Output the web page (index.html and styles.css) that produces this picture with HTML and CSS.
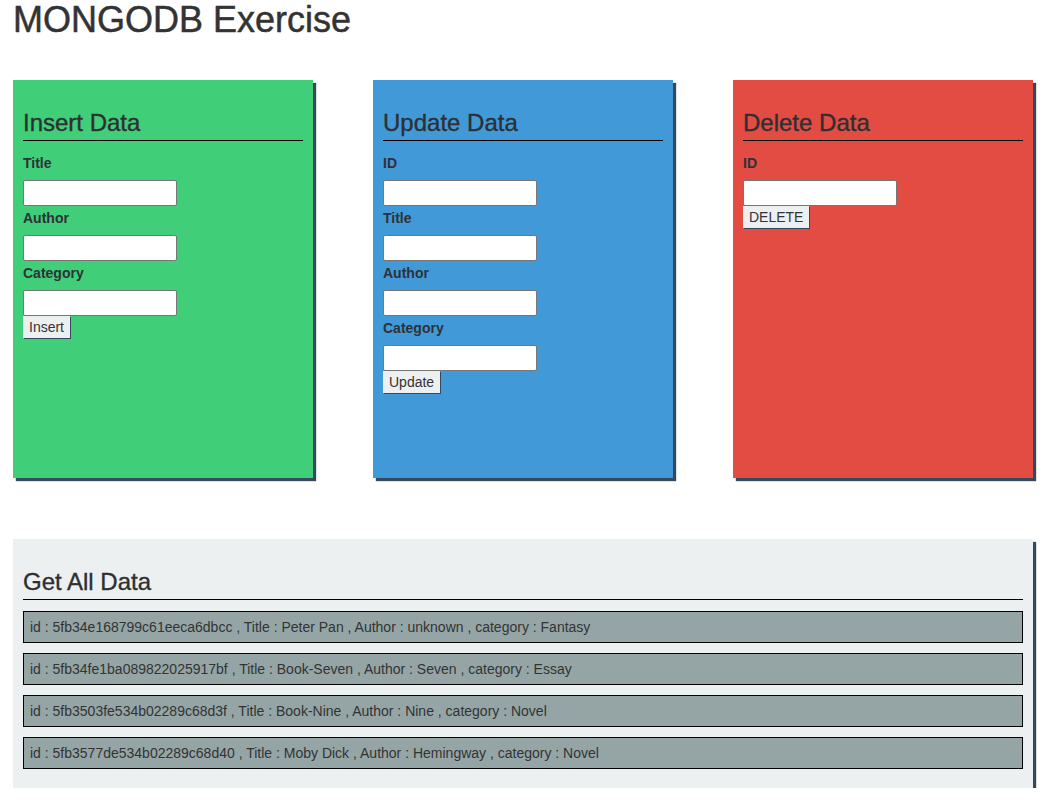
FILE: index.html
```html
<!DOCTYPE html>
<html lang="en">
<head>
<meta charset="utf-8">
<title>MONGODB Exercise</title>
<link rel="stylesheet" href="styles.css">
</head>
<body>
<div class="container">
  <h1 class="page-title">MONGODB Exercise</h1>
  <div class="cards">
    <section class="card card-insert">
      <h3 class="card-title">Insert Data</h3>
      <label class="field-label">Title</label>
      <input class="field-input" type="text">
      <label class="field-label">Author</label>
      <input class="field-input" type="text">
      <label class="field-label">Category</label>
      <input class="field-input" type="text">
      <button class="btn" type="button">Insert</button>
    </section>
    <section class="card card-update">
      <h3 class="card-title">Update Data</h3>
      <label class="field-label">ID</label>
      <input class="field-input" type="text">
      <label class="field-label">Title</label>
      <input class="field-input" type="text">
      <label class="field-label">Author</label>
      <input class="field-input" type="text">
      <label class="field-label">Category</label>
      <input class="field-input" type="text">
      <button class="btn" type="button">Update</button>
    </section>
    <section class="card card-delete">
      <h3 class="card-title">Delete Data</h3>
      <label class="field-label">ID</label>
      <input class="field-input" type="text">
      <button class="btn" type="button">DELETE</button>
    </section>
  </div>
  <section class="panel">
    <h3 class="card-title panel-title">Get All Data</h3>
    <div class="row">id : 5fb34e168799c61eeca6dbcc , Title : Peter Pan , Author : unknown , category : Fantasy</div>
    <div class="row">id : 5fb34fe1ba089822025917bf , Title : Book-Seven , Author : Seven , category : Essay</div>
    <div class="row">id : 5fb3503fe534b02289c68d3f , Title : Book-Nine , Author : Nine , category : Novel</div>
    <div class="row">id : 5fb3577de534b02289c68d40 , Title : Moby Dick , Author : Hemingway , category : Novel</div>
  </section>
</div>
</body>
</html>
```
FILE: styles.css
```css
html, body {
  margin: 0;
  padding: 0;
  background: #ffffff;
}
body {
  font-family: "Liberation Sans", Arial, Helvetica, sans-serif;
  font-size: 14px;
  line-height: 20px;
  color: #333333;
}
.container {
  width: 1020px;
  margin: 0 13px;
}
.page-title {
  margin: 0;
  font-size: 36px;
  line-height: 40px;
  font-weight: normal;
  color: #333333;
  -webkit-text-stroke: 0.5px #333333;
}
.cards {
  display: flex;
  gap: 60px;
  margin-top: 40px;
}
.card {
  width: 300px;
  height: 398px;
  box-sizing: border-box;
  padding: 10px;
  box-shadow: 3px 3px 1px #34495e;
}
.card-insert { background: #41ce78; }
.card-update { background: #4299d8; }
.card-delete { background: #e24c43; }
.card-title {
  margin: 20px 0 12px;
  padding-bottom: 4px;
  border-bottom: 1px solid #000000;
  font-size: 24px;
  line-height: 26px;
  font-weight: normal;
  color: #2d2f33;
  -webkit-text-stroke: 0.35px #2d2f33;
}
.panel-title {
  margin-bottom: 11px;
}
.field-label {
  display: block;
  margin: 2px 0 7px;
  font-weight: bold;
  color: #2d3138;
}
.field-input {
  display: block;
  width: 154px;
  height: 26px;
  box-sizing: border-box;
  margin: 0;
  padding: 2px 4px;
  border: 1px solid #767676;
  border-radius: 2px;
  background: #ffffff;
  font-family: inherit;
  font-size: 14px;
}
.btn {
  display: block;
  height: 22px;
  margin: 0;
  padding: 0 6px;
  border: none;
  border-radius: 0;
  background: #ecf0f1;
  box-shadow: 1px 1px 0 #34495e;
  font-family: "Liberation Sans", Arial, sans-serif;
  font-size: 14px;
  line-height: 22px;
  color: #333333;
  cursor: pointer;
}
.panel {
  margin-top: 61px;
  padding: 10px 10px 9px;
  background: #ecf0f1;
  box-shadow: 3px 3px 1px #34495e;
}
.row {
  margin-bottom: 10px;
  padding: 5px 6px;
  border: 1px solid #000000;
  background: #95a5a6;
  color: #333333;
}
```
